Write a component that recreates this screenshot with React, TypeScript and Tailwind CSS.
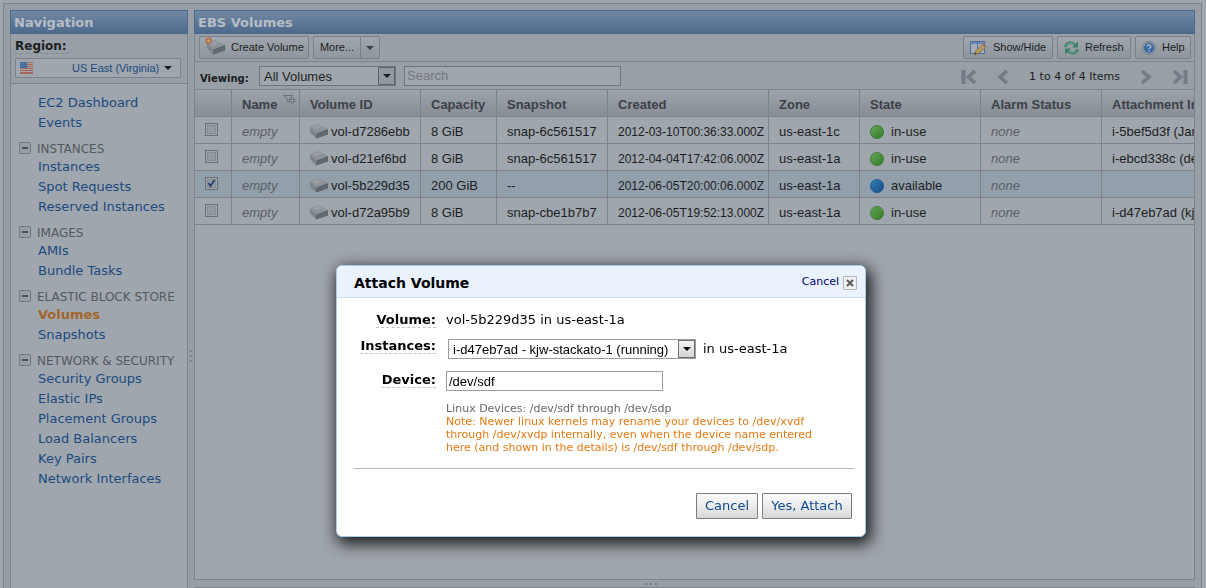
import React from 'react';

const verdana = "font-['DejaVu_Sans',Verdana,sans-serif]";
const arial = "font-['Liberation_Sans',Arial,sans-serif]";

function DriveIcon({ badge = false }: { badge?: boolean }) {
  return (
    <svg width="18" height="15" viewBox="0 0 18 15" className="shrink-0 overflow-visible" aria-hidden="true">
      <path d="M0 3 L8 0 L18 5 L6.5 9.5 Z" fill="#8d9399" />
      <path d="M2 3.2 L8 1 L12 3 L6 5.4 Z" fill="#999fa5" />
      <path d="M0 3 L6.5 9.5 L6 14.6 L0 8.2 Z" fill="#7d838a" />
      <path d="M6.5 9.5 L18 5 V10.4 L6 14.6 Z" fill="#5c6269" />
      <path d="M8 11 L17 7.6 M8 12.6 L17 9.4" stroke="#6f757c" strokeWidth="0.7" />
      {badge && (
        <>
          <circle cx="1.6" cy="0.8" r="3.2" fill="#b2694f" />
          <circle cx="1.6" cy="0.8" r="1.6" fill="#c0ae5c" />
        </>
      )}
    </svg>
  );
}

function Caret({ className }: { className: string }) {
  return (
    <svg width="8" height="4" viewBox="0 0 8 4" className={className} aria-hidden="true">
      <path d="M0 0 H8 L4 4 Z" fill="currentColor" />
    </svg>
  );
}

function FlagIcon() {
  return (
    <svg width="13" height="12" viewBox="0 0 13 12" className="shrink-0" aria-hidden="true">
      <rect width="13" height="12" fill="#a9a3a5" />
      {[0, 2, 4, 6, 8, 10].map((y) => (
        <rect key={y} y={y} width="13" height="1" fill="#a4675f" />
      ))}
      <rect y="11" width="13" height="1" fill="#a4675f" />
      <rect width="7" height="6" fill="#3f6f9e" />
      <path d="M1 1.5 H6 M1 3.5 H6" stroke="#6d8fae" strokeWidth="0.6" strokeDasharray="1 1" />
    </svg>
  );
}

function ShowHideIcon() {
  return (
    <svg width="17" height="16" viewBox="0 0 17 16" aria-hidden="true">
      <rect x="0.5" y="1.5" width="14" height="12" fill="#a5adb8" stroke="#53719e" />
      <rect x="1" y="2" width="13" height="2" fill="#6c89b3" />
      <path d="M7.5 2 V13" stroke="#53719e" />
      <path d="M4.5 14.5 L5.5 11 L12.5 4.5 L15.5 7.3 L8.5 13.5 Z" fill="#b59a5b" stroke="#7d6a45" strokeWidth="0.8" />
      <path d="M12.5 4.5 L15.5 7.3 L16.3 6.2 L13.6 3.6 Z" fill="#a06d62" />
      <path d="M4.5 14.5 L5 12.6 L6.6 14 Z" fill="#33373d" />
    </svg>
  );
}

function RefreshIcon() {
  return (
    <svg width="15" height="14" viewBox="0 0 15 14" fill="none" aria-hidden="true">
      <path d="M1.5 6 C2 2 7.5 0.4 10.8 3.6" stroke="#3b7f68" strokeWidth="2.6" />
      <path d="M14 0.6 V6.4 H8 Z" fill="#3b7f68" />
      <path d="M13.5 8 C13 12 7.5 13.6 4.2 10.4" stroke="#3b7f68" strokeWidth="2.6" />
      <path d="M1 13.4 V7.6 H7 Z" fill="#3b7f68" />
      <path d="M2 5.4 C3 2.4 7.5 1.2 10.4 3.8 M13 8.6 C12 11.6 7.5 12.8 4.6 10.2" stroke="#7fae98" strokeWidth="0.9" />
    </svg>
  );
}

function HelpIcon() {
  return (
    <svg width="14" height="14" viewBox="0 0 14 14" aria-hidden="true">
      <circle cx="7" cy="7" r="6.5" fill="#929aa5" stroke="#737b88" />
      <circle cx="7" cy="7" r="5" fill="#3a68a3" />
      <path d="M5.2 5.6 C5.2 3.4 8.9 3.4 8.9 5.5 C8.9 6.8 7 6.8 7 8.2 M7 9.2 V10.5" fill="none" stroke="#b4bfcd" strokeWidth="1.3" />
    </svg>
  );
}

function PagerIcon({ back, edge }: { back?: boolean; edge?: boolean }) {
  return (
    <svg width="16" height="14" viewBox="0 0 16 14" className={back ? '' : '-scale-x-100'} aria-hidden="true">
      {edge && <rect x="0.5" y="0" width="4" height="14" fill="#757b84" />}
      <path d={edge ? 'M14 1 L7.5 7 L14 13' : 'M12 1 L5 7 L12 13'} fill="none" stroke="#757b84" strokeWidth="3.6" />
    </svg>
  );
}

function FilterIcon() {
  return (
    <svg width="13" height="10" viewBox="0 0 13 10" fill="none" aria-hidden="true">
      <path d="M0.5 0.5 H9.5 L6 4 V8 L4.5 7 V4 Z" stroke="#6c727a" />
      <path d="M9.5 2.5 V8.5 M6.5 5.5 H12.5" stroke="#6c727a" strokeWidth="3" />
      <path d="M9.5 3 V8 M7 5.5 H12" stroke="#9299a1" strokeWidth="1" />
    </svg>
  );
}

function StateBall({ color }: { color: 'green' | 'blue' }) {
  const green = color === 'green';
  return (
    <svg width="14" height="14" viewBox="0 0 14 14" className="shrink-0" aria-hidden="true">
      <defs>
        <linearGradient id={`ball-${color}`} x1="0" y1="0" x2="1" y2="1">
          <stop offset="0.1" stopColor={green ? '#63a254' : '#2f7cb0'} />
          <stop offset="0.9" stopColor={green ? '#35802c' : '#1c4f8c'} />
        </linearGradient>
      </defs>
      <circle cx="7" cy="7" r="6.6" fill={`url(#ball-${color})`} stroke={green ? '#3a7a36' : '#1f568c'} strokeWidth="0.8" />
    </svg>
  );
}

const groups = [
  { title: 'INSTANCES', items: ['Instances', 'Spot Requests', 'Reserved Instances'] },
  { title: 'IMAGES', items: ['AMIs', 'Bundle Tasks'] },
  { title: 'ELASTIC BLOCK STORE', items: ['Volumes', 'Snapshots'] },
  {
    title: 'NETWORK & SECURITY',
    items: ['Security Groups', 'Elastic IPs', 'Placement Groups', 'Load Balancers', 'Key Pairs', 'Network Interfaces'],
  },
];

const rows = [
  { id: 'vol-d7286ebb', size: '8 GiB', snap: 'snap-6c561517', created: '2012-03-10T00:36:33.000Z', zone: 'us-east-1c', state: 'in-use', attach: 'i-5bef5d3f (January)' },
  { id: 'vol-d21ef6bd', size: '8 GiB', snap: 'snap-6c561517', created: '2012-04-04T17:42:06.000Z', zone: 'us-east-1a', state: 'in-use', attach: 'i-ebcd338c (dev)' },
  { id: 'vol-5b229d35', size: '200 GiB', snap: '--', created: '2012-06-05T20:00:06.000Z', zone: 'us-east-1a', state: 'available', attach: '' },
  { id: 'vol-d72a95b9', size: '8 GiB', snap: 'snap-cbe1b7b7', created: '2012-06-05T19:52:13.000Z', zone: 'us-east-1a', state: 'in-use', attach: 'i-d47eb7ad (kjw-stackato-1)' },
];

const headers = ['Volume ID', 'Capacity', 'Snapshot', 'Created', 'Zone', 'State', 'Alarm Status', 'Attachment Information'];

const toolButton =
  'flex h-[23px] items-center whitespace-nowrap rounded-[2px] border border-[#7b8088] bg-linear-to-b from-[#a0a6ad] to-[#90969e] text-[11px] text-[#1b1e22]';
const titleBar =
  'flex h-6 shrink-0 items-center border border-[#4a6a92] bg-linear-to-b from-[#7389a3] to-[#4d6a8d] px-[3px] pt-[2px] text-[13px] font-bold text-[#b7bdc4]';
const cell = 'overflow-hidden border-r border-b border-[#7d828b] pl-[10px] whitespace-nowrap';
const textCell = `${cell} pt-[3px]`;

function NavLink({ label }: { label: string }) {
  return (
    <li className="h-5 pl-[27px] leading-[22px]">
      <a href="#" className={label === 'Volumes' ? 'font-bold text-[#a2642a]' : 'text-[#1b4a80]'}>
        {label}
      </a>
    </li>
  );
}

function Navigation() {
  return (
    <aside className="flex w-[178px] shrink-0 flex-col">
      <h2 className={titleBar}>Navigation</h2>
      <div className="flex grow flex-col border-x border-[#7d828b] bg-[#a0a6ad]">
        <div className="flex h-[50px] shrink-0 flex-col border-b border-[#7d828b] bg-[#989fa6] pr-[6px] pl-1">
          <label htmlFor="region" className="mt-[3px] h-[17px] w-[54px] border-b border-dashed border-[#858a92] text-[12px] leading-[18px] font-bold text-[#1b1e22]">
            Region:
          </label>
          <div className="relative mt-1 flex h-5 items-center border border-[#7d828b] bg-[#a0a6ad] pl-1">
            <FlagIcon />
            <select id="region" className={`ml-auto appearance-none pr-5 text-[11px] text-[#1b4a80] outline-none ${arial}`}>
              <option>US East (Virginia)</option>
            </select>
            <Caret className="pointer-events-none absolute right-2 text-[#1b1e22]" />
          </div>
        </div>
        <nav className="pt-2 text-[13px]">
          <ul>
            <NavLink label="EC2 Dashboard" />
            <NavLink label="Events" />
          </ul>
          {groups.map((g) => (
            <section key={g.title}>
              <h3 className="mt-2 flex h-4 items-center gap-[6px] pl-2 text-[12px] whitespace-nowrap text-[#545960]">
                <button aria-label={`Collapse ${g.title}`} className="flex size-3 items-center justify-center rounded-[1px] border border-[#747a82] bg-[#989ea6]">
                  <span className="h-[2px] w-[6px] bg-[#4c5157]" />
                </button>
                <span className="pt-[2px]">{g.title}</span>
              </h3>
              <ul>
                {g.items.map((i) => (
                  <NavLink key={i} label={i} />
                ))}
              </ul>
            </section>
          ))}
        </nav>
      </div>
    </aside>
  );
}

function VolumesPanel() {
  return (
    <main className="flex min-w-0 grow flex-col">
      <h2 className={titleBar}>EBS Volumes</h2>
      <div className="flex min-h-0 grow flex-col border-x border-b border-[#7d828b] bg-[#a0a6ad]">
        <div className={`flex h-7 shrink-0 items-center border-b border-[#7d828b] bg-[#989fa6] pr-[3px] pl-1 ${arial}`}>
          <button className={`${toolButton} w-[110px] gap-[6px] pl-[7px]`}>
            <DriveIcon badge />
            Create Volume
          </button>
          <div className="ml-1 flex">
            <button className={`${toolButton} w-12 justify-center rounded-r-none`}>More...</button>
            <button aria-label="More actions" className={`${toolButton} w-[19px] justify-center rounded-l-none border-l-0`}>
              <Caret className="text-[#3c4046]" />
            </button>
          </div>
          <div className="ml-auto flex gap-1">
            <button className={`${toolButton} w-[90px] gap-[6px] pl-[6px]`}>
              <ShowHideIcon />
              Show/Hide
            </button>
            <button className={`${toolButton} w-[74px] gap-[6px] pl-[6px]`}>
              <RefreshIcon />
              Refresh
            </button>
            <button className={`${toolButton} w-14 gap-[6px] pl-[6px]`}>
              <HelpIcon />
              Help
            </button>
          </div>
        </div>
        <div className="flex h-7 shrink-0 items-center border-b border-[#7d828b] bg-[#989fa6] pr-[6px] pl-[5px] text-[11px] text-[#1b1e22]">
          <label htmlFor="viewing" className="w-[59px] pt-[6px] text-[10px] font-bold">
            Viewing:
          </label>
          <div className="relative h-5 w-[137px] border border-[#6f757d] bg-[#a0a6ad]">
            <select id="viewing" className={`block h-full w-full appearance-none pl-1 text-[13px] outline-none ${arial}`}>
              <option>All Volumes</option>
            </select>
            <span className="pointer-events-none absolute inset-y-0 right-0 flex w-[17px] items-center justify-center border border-[#5d6269] bg-[#92989f]">
              <Caret className="text-[#1b1e22]" />
            </span>
          </div>
          <input aria-label="Search" placeholder="Search" className={`ml-2 h-5 w-[217px] border border-[#6f757d] bg-[#a0a6ad] px-[2px] text-[13px] outline-none placeholder:text-[#72777e] ${arial}`} />
          <div className="ml-auto flex items-center pt-[2px]">
            <button aria-label="First page"><PagerIcon back edge /></button>
            <button aria-label="Previous page" className="ml-[18px]"><PagerIcon back /></button>
            <span className="mx-[18px] pt-px whitespace-nowrap">1 to 4 of 4 Items</span>
            <button aria-label="Next page"><PagerIcon /></button>
            <button aria-label="Last page" className="ml-[18px]"><PagerIcon edge /></button>
          </div>
        </div>
        <div className={`overflow-hidden ${arial}`}>
          <table className="w-[1028px] table-fixed border-separate border-spacing-0 text-[13px] text-[#1b1e22]">
            <colgroup>
              <col className="w-[37px]" />
              <col className="w-[68px]" />
              <col className="w-[121px]" />
              <col className="w-[76px]" />
              <col className="w-[111px]" />
              <col className="w-[161px]" />
              <col className="w-[91px]" />
              <col className="w-[121px]" />
              <col className="w-[121px]" />
              <col className="w-[121px]" />
            </colgroup>
            <thead>
              <tr className="h-[27px] bg-linear-to-b from-[#9da3aa] to-[#878d95] text-left text-[#3d4147]">
                <th className={cell} />
                <th className={textCell}>
                  <div className="flex items-start gap-[6px]">
                    Name
                    <FilterIcon />
                  </div>
                </th>
                {headers.map((h) => (
                  <th key={h} className={textCell}>{h}</th>
                ))}
              </tr>
            </thead>
            <tbody>
              {rows.map((r) => {
                const selected = r.state === 'available';
                return (
                  <tr key={r.id} className={selected ? 'h-[27px] bg-[#949fac]' : 'h-[27px]'}>
                    <td className={`${cell} pb-[2px]`}>
                      <div className="grid size-[13px]">
                        <input type="checkbox" aria-label={`Select ${r.id}`} defaultChecked={selected} className="peer col-start-1 row-start-1 size-[13px] appearance-none border border-[#6a6f77] bg-[#959ba2] shadow-[inset_0_0_0_1px_#a0a6ad,inset_0_0_0_2px_#858b92]" />
                        <svg viewBox="0 0 13 13" className="pointer-events-none invisible col-start-1 row-start-1 size-[13px] peer-checked:visible" aria-hidden="true">
                          <path d="M3.5 6 L5.5 9 L9.5 3" fill="none" stroke="#2c3f78" strokeWidth="1.9" />
                        </svg>
                      </div>
                    </td>
                    <td className={`${textCell} text-[#5a5f66] italic`}>empty</td>
                    <td className={textCell}>
                      <div className="flex items-center gap-[3px]">
                        <DriveIcon />
                        {r.id}
                      </div>
                    </td>
                    <td className={textCell}>{r.size}</td>
                    <td className={textCell}>{r.snap}</td>
                    <td className={`${textCell} text-[12px]`}>{r.created}</td>
                    <td className={textCell}>{r.zone}</td>
                    <td className={textCell}>
                      <div className="flex items-center gap-[7px]">
                        <StateBall color={selected ? 'blue' : 'green'} />
                        {r.state}
                      </div>
                    </td>
                    <td className={`${textCell} text-[#5a5f66] italic`}>none</td>
                    <td className={textCell}>{r.attach}</td>
                  </tr>
                );
              })}
            </tbody>
          </table>
        </div>
      </div>
      <div className="flex h-2 shrink-0 items-center justify-center gap-[3px] border-b border-[#7d828b] pr-[88px]">
        <Dots />
      </div>
    </main>
  );
}

function Dots() {
  return (
    <>
      <span className="size-[2px] bg-[#777d85]" />
      <span className="size-[2px] bg-[#777d85]" />
      <span className="size-[2px] bg-[#777d85]" />
    </>
  );
}

const fieldLabel = 'justify-self-end border-b border-dashed border-[#c4c4c4] h-[17px] leading-[17px] font-bold';
const dialogButton =
  'h-[26px] rounded-[1px] border border-[#7c7c7c] bg-linear-to-b from-[#fafafa] via-[#ececec] to-[#d6d6d8] text-[13px] text-[#0b4a8c]';

function AttachDialog() {
  return (
    <div className="fixed inset-0 flex items-start justify-center pt-[265px] pr-1">
      <div role="dialog" aria-label="Attach Volume" className="w-[530px] rounded-[6px] border border-[#a6cdec] bg-white pb-[17px] text-[13px] text-black shadow-[3px_5px_16px_2px_rgba(0,0,0,0.85)]">
        <div className="flex h-8 items-center rounded-t-[5px] border-b border-[#c6def2] bg-[#eaf2fe] pt-[2px] pr-2 pl-[17px]">
          <h1 className="pt-[2px] text-[14px] font-bold">Attach Volume</h1>
          <button className="ml-auto flex items-center gap-1 text-[11px] text-[#00006e]">
            Cancel
            <span className="flex size-[14px] items-center justify-center rounded-[1px] border border-[#b5b5b5] bg-[#f0f0f0]">
              <svg width="8" height="8" viewBox="0 0 8 8" aria-hidden="true">
                <path d="M1 1 L7 7 M7 1 L1 7" stroke="#5a5a5a" strokeWidth="2" />
              </svg>
            </span>
          </button>
        </div>
        <div className="grid grid-cols-[99px_1fr] gap-x-[10px] pt-[13px]">
          <div className={fieldLabel}>Volume:</div>
          <div className="h-[26px] leading-[17px]">vol-5b229d35 in us-east-1a</div>
          <label htmlFor="instances" className={fieldLabel}>Instances:</label>
          <div className="flex h-[34px] items-start gap-[7px] pt-[2px] pl-[2px]">
            <div className="relative h-5 w-[248px] border border-[#9b9ba3]">
              <select id="instances" className={`block h-full w-full appearance-none pl-1 text-[13px] outline-none ${arial}`}>
                <option>i-d47eb7ad - kjw-stackato-1 (running)</option>
              </select>
              <span className="pointer-events-none absolute inset-y-0 right-0 flex w-[17px] items-center justify-center border border-[#707070] bg-linear-to-b from-[#f3f3f3] to-[#d4d4d4]">
                <Caret className="text-black" />
              </span>
            </div>
            <span className="leading-5">in us-east-1a</span>
          </div>
          <label htmlFor="device" className={fieldLabel}>Device:</label>
          <div>
            <input id="device" defaultValue="/dev/sdf" className={`block h-5 w-[217px] border border-[#9b9ba3] px-[2px] text-[13px] outline-none ${arial}`} />
            <p className="mt-[11px] text-[11px] leading-[13px] whitespace-nowrap text-[#666]">
              Linux Devices: /dev/sdf through /dev/sdp
              <span className="block text-[#e47911]">
                Note: Newer linux kernels may rename your devices to /dev/xvdf
                <br />
                through /dev/xvdp internally, even when the device name entered
                <br />
                here (and shown in the details) is /dev/sdf through /dev/sdp.
              </span>
            </p>
          </div>
        </div>
        <div className="mt-[14px] mr-[11px] ml-[17px] flex justify-end gap-1 border-t border-[#b5b5b5] pt-6 pr-[2px]">
          <button className={`${dialogButton} w-[62px]`}>Cancel</button>
          <button className={`${dialogButton} w-[90px]`}>Yes, Attach</button>
        </div>
      </div>
    </div>
  );
}

export default function App() {
  return (
    <div className={`h-screen overflow-hidden bg-[#a0a6ad] pt-[3px] pr-1 pl-[3px] ${verdana}`}>
      <div className="flex h-full border-x border-t border-[#7d828b] bg-[#989ea6] px-[6px] pt-[6px]">
        <Navigation />
        <div className="flex w-[6px] shrink-0 flex-col items-center justify-center gap-[3px] pt-[113px]">
          <Dots />
        </div>
        <VolumesPanel />
      </div>
      <AttachDialog />
    </div>
  );
}
